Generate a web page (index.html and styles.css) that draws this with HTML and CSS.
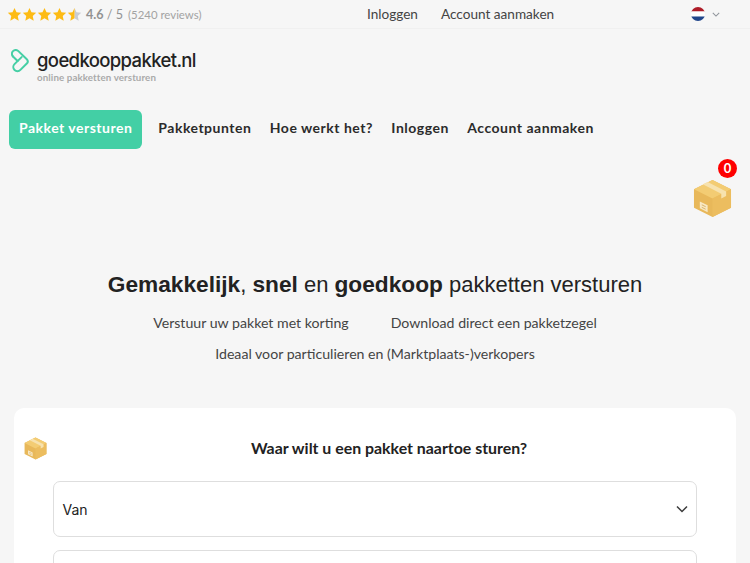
FILE: index.html
```
<!DOCTYPE html>
<html lang="nl">
<head>
<meta charset="utf-8">
<title>goedkooppakket.nl</title>
<link rel="stylesheet" href="styles.css">
</head>
<body>
<svg class="defs" width="0" height="0" aria-hidden="true">
  <defs>
    <symbol id="star" viewBox="0 0 24 24"><path d="M12 1.500l3.200 6.900 7.500.9-5.500 5.100 1.500 7.400L12 18.100l-6.700 3.700 1.500-7.400L1.300 9.300l7.500-.9z"/></symbol>
    <symbol id="box" viewBox="0 0 40 40">
      <path fill="#e8b85a" d="M20 1L39 10.500V29.500L20 39L1 29.500V10.500z"/>
      <path fill="#f3cc73" d="M20 1L39 10.500L20 20L1 10.500z"/>
      <path fill="#ecbd5f" d="M20 20L39 10.500V29.500L20 39z"/>
      <path fill="#f7e2ae" d="M10 5.500L29 15.200V20L34 17.500V12.800L15 3z"/>
      <path fill="#f8e8c4" d="M7 23l8 4v7l-8-4z"/>
      <path fill="#d9b36a" d="M9 26l4 2v1l-4-2zM9 28.500l4 2v1l-4-2z"/>
    </symbol>
  </defs>
</svg>

<header class="topbar">
  <div class="rating">
    <div class="stars">
      <svg class="star"><use href="#star"/></svg>
      <svg class="star"><use href="#star"/></svg>
      <svg class="star"><use href="#star"/></svg>
      <svg class="star"><use href="#star"/></svg>
      <svg class="star star-half" viewBox="0 0 24 24">
        <path fill="#c9ccd1" d="M12 1.500l3.200 6.900 7.500.9-5.500 5.100 1.500 7.400L12 18.100z"/>
        <path fill="#fdbb14" d="M12 1.500L8.800 8.400l-7.500.9 5.500 5.100-1.500 7.400L12 18.100z"/>
      </svg>
    </div>
    <span class="score"><b>4.6</b> / 5</span>
    <span class="reviews">(5240 reviews)</span>
  </div>
  <nav class="toplinks">
    <a href="#">Inloggen</a>
    <a href="#">Account aanmaken</a>
  </nav>
  <div class="lang">
    <svg class="flag" viewBox="0 0 16 16">
      <clipPath id="flagclip"><circle cx="8" cy="8" r="7"/></clipPath>
      <g clip-path="url(#flagclip)">
        <rect width="16" height="5.500" fill="#ae1c28"/>
        <rect y="5.500" width="16" height="5" fill="#fff"/>
        <rect y="10.500" width="16" height="5.500" fill="#21468b"/>
      </g>
    </svg>
    <svg class="caret" viewBox="0 0 10 6"><path d="M1 1l4 4 4-4" fill="none" stroke="#8f949b" stroke-width="1.300"/></svg>
  </div>
</header>

<a class="logo" href="#">
  <svg class="logo-mark" viewBox="0 0 18 24">
    <path d="M2 7.500a3.800 3.800 0 0 1 5.400-5.400l8.400 8.200a3 3 0 0 1 0 4.200l-6.400 6.400a4.100 4.100 0 0 1-5.900-5.800l7.100-7" fill="none" stroke="#45cfa5" stroke-width="2" stroke-linecap="round" stroke-linejoin="round"/>
    <path d="M2 7.500l4.600 4.500" fill="none" stroke="#45cfa5" stroke-width="2" stroke-linecap="round"/>
  </svg>
  <span class="logo-text">
    <span class="logo-name">goedkooppakket.nl</span>
    <span class="logo-tag">online pakketten versturen</span>
  </span>
</a>

<nav class="mainnav">
  <a class="btn" href="#">Pakket versturen</a>
  <a href="#">Pakketpunten</a>
  <a href="#">Hoe werkt het?</a>
  <a href="#">Inloggen</a>
  <a href="#">Account aanmaken</a>
</nav>

<div class="cart">
  <svg class="cart-box"><use href="#box"/></svg>
  <span class="cart-count">0</span>
</div>

<section class="hero">
  <h1><b>Gemakkelijk</b>, <b>snel</b> en <b>goedkoop</b> pakketten versturen</h1>
  <ul class="usps">
    <li>Verstuur uw pakket met korting</li>
    <li>Download direct een pakketzegel</li>
    <li>Ideaal voor particulieren en (Marktplaats-)verkopers</li>
  </ul>
</section>

<main class="card">
  <svg class="card-box"><use href="#box"/></svg>
  <h2>Waar wilt u een pakket naartoe sturen?</h2>
  <div class="select">
    <span>Van</span>
    <svg class="select-caret" viewBox="0 0 12 8"><path d="M1 1.500l5 5 5-5" fill="none" stroke="#3d3d3d" stroke-width="1.500"/></svg>
  </div>
  <div class="select"></div>
</main>
</body>
</html>
```
FILE: styles.css
```
* { box-sizing: border-box; }
html, body { margin: 0; height: 563px; overflow: hidden; }
body { background: #f6f6f6; color: #222; font-family: "Lato", "Liberation Sans", sans-serif; position: relative; }
a { color: inherit; text-decoration: none; }
.defs { position: absolute; }

.topbar { height: 29px; display: flex; align-items: center; border-bottom: 1px solid #f0f0f0; padding: 0 30px 0 7px; }
.rating { display: flex; align-items: center; width: 360px; }
.stars { display: flex; }
.star { width: 15px; height: 15px; fill: #fdbb14; }
.score { margin-left: 4px; font-size: 12.600px; color: #929292; }
.score b { font-weight: 700; }
.reviews { margin-left: 5px; font-size: 11.400px; color: #a3a3a3; }
.toplinks { display: flex; gap: 23px; font-size: 13.600px; color: #444; padding-bottom: 1px; }
.lang { margin-left: auto; display: flex; align-items: center; gap: 6px; }
.flag { width: 16px; height: 16px; }
.caret { width: 8px; height: 5px; }

.logo { display: flex; align-items: flex-start; gap: 8px; margin: 19px 0 0 11px; height: 62px; }
.logo-mark { width: 18px; height: 24px; margin-top: 1px; }
.logo-text { display: flex; flex-direction: column; }
.logo-name { font-size: 18.500px; font-weight: 500; letter-spacing: -0.630px; color: #222; line-height: 24px; font-family: "Inter", sans-serif; }
.logo-tag { font-size: 9.750px; font-weight: 700; color: #aaa; line-height: 10px; letter-spacing: 0.100px; }

.mainnav { display: flex; align-items: center; height: 39px; margin-left: 9px; gap: 18.500px; font-size: 14px; font-weight: 700; letter-spacing: 0.500px; color: #2b2b2b; line-height: 20px; }
.mainnav a { padding-bottom: 3px; }
.btn { background: #43cfa5; color: #fff; border-radius: 6px; height: 39px; padding: 0 10px; display: flex; align-items: center; margin-right: -2.500px; }

.cart { position: absolute; left: 693px; top: 158px; width: 48px; height: 60px; }
.cart-box { position: absolute; left: 0; top: 21px; width: 39px; height: 39px; }
.cart-count { position: absolute; left: 25px; top: 1px; width: 19px; height: 19px; border-radius: 50%; background: #fe0000; color: #fff; font-size: 13px; font-weight: 700; line-height: 19px; text-align: center; }

.hero { margin-top: 121px; text-align: center; }
h1 { margin: 0; font-family: "Liberation Sans", sans-serif; font-size: 22px; font-weight: 400; line-height: 30px; color: #222; }
h1 b { font-size: 22.700px; font-weight: 700; line-height: 1; }
.usps { list-style: none; margin: 14px 0 0; padding: 0 100px; display: flex; flex-wrap: wrap; justify-content: center; column-gap: 42px; row-gap: 13px; font-size: 14.150px; line-height: 18px; color: #444; }

.card { position: relative; margin: 45px 14px 0; background: #fff; border-radius: 10px; padding: 30px 39px 0; height: 300px; }
.card-box { position: absolute; left: 9.500px; top: 28.500px; width: 23px; height: 23px; }
h2 { margin: 0 0 23px; padding-left: 28px; font-size: 15.900px; font-weight: 700; line-height: 20px; text-align: center; color: #222; }
.select { height: 56px; border: 1.500px solid #dedede; border-radius: 7px; display: flex; align-items: center; justify-content: space-between; padding: 0 8.500px 0 8.500px; margin-bottom: 13px; font-family: "Inter", sans-serif; font-size: 14px; color: #222; }
.select-caret { width: 12px; height: 8px; }
```
